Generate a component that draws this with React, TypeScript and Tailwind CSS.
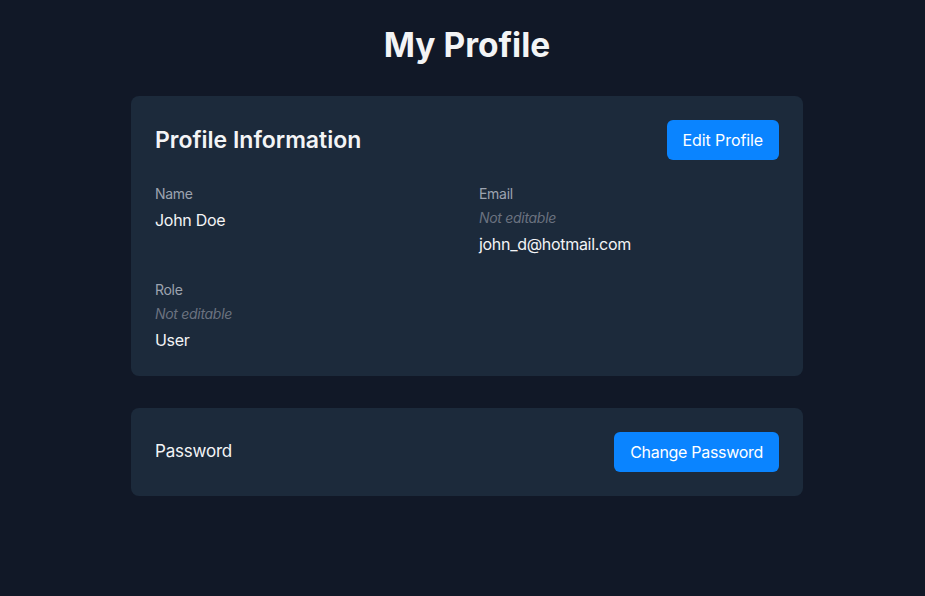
export default function App() {
  return (
    <div className="min-h-screen bg-[#111827] text-[#f3f4f6] pl-[33px] pr-6 pt-[25px] pb-6" style={{ fontFamily: 'Inter, "Noto Sans", sans-serif' }}>
      <h1 className="text-center text-[33.5px] leading-[40px] font-bold mb-[31px]">My Profile</h1>
      <div className="max-w-2xl mx-auto flex flex-col gap-8">
        <div className="bg-[#1c2a3b] rounded-lg p-6">
          <div className="flex items-center justify-between mb-6">
            <h2 className="text-[23px] leading-8 font-semibold">Profile Information</h2>
            <button className="bg-[#0a84ff] text-white rounded-md px-4 h-10 text-base tracking-[-0.1px]">Edit Profile</button>
          </div>
          <div className="grid grid-cols-2 gap-6 tracking-[-0.3px]">
            <div>
              <div className="text-sm text-[#9ca3af] mb-1">Name</div>
              <div className="text-base">John Doe</div>
            </div>
            <div>
              <div className="text-sm text-[#9ca3af] mb-1">Email</div>
              <div className="text-sm italic text-[#6b7280] mb-1">Not editable</div>
              <div className="text-base">john_d@hotmail.com</div>
            </div>
            <div>
              <div className="text-sm text-[#9ca3af] mb-1">Role</div>
              <div className="text-sm italic text-[#6b7280] mb-1">Not editable</div>
              <div className="text-base">User</div>
            </div>
          </div>
        </div>
        <div className="bg-[#1c2a3b] rounded-lg p-6 flex items-center justify-between">
          <span className="text-[17px] tracking-[-0.2px]">Password</span>
          <button className="bg-[#0a84ff] text-white rounded-md px-4 h-10 text-base tracking-[-0.3px]">Change Password</button>
        </div>
      </div>
    </div>
  );
}
